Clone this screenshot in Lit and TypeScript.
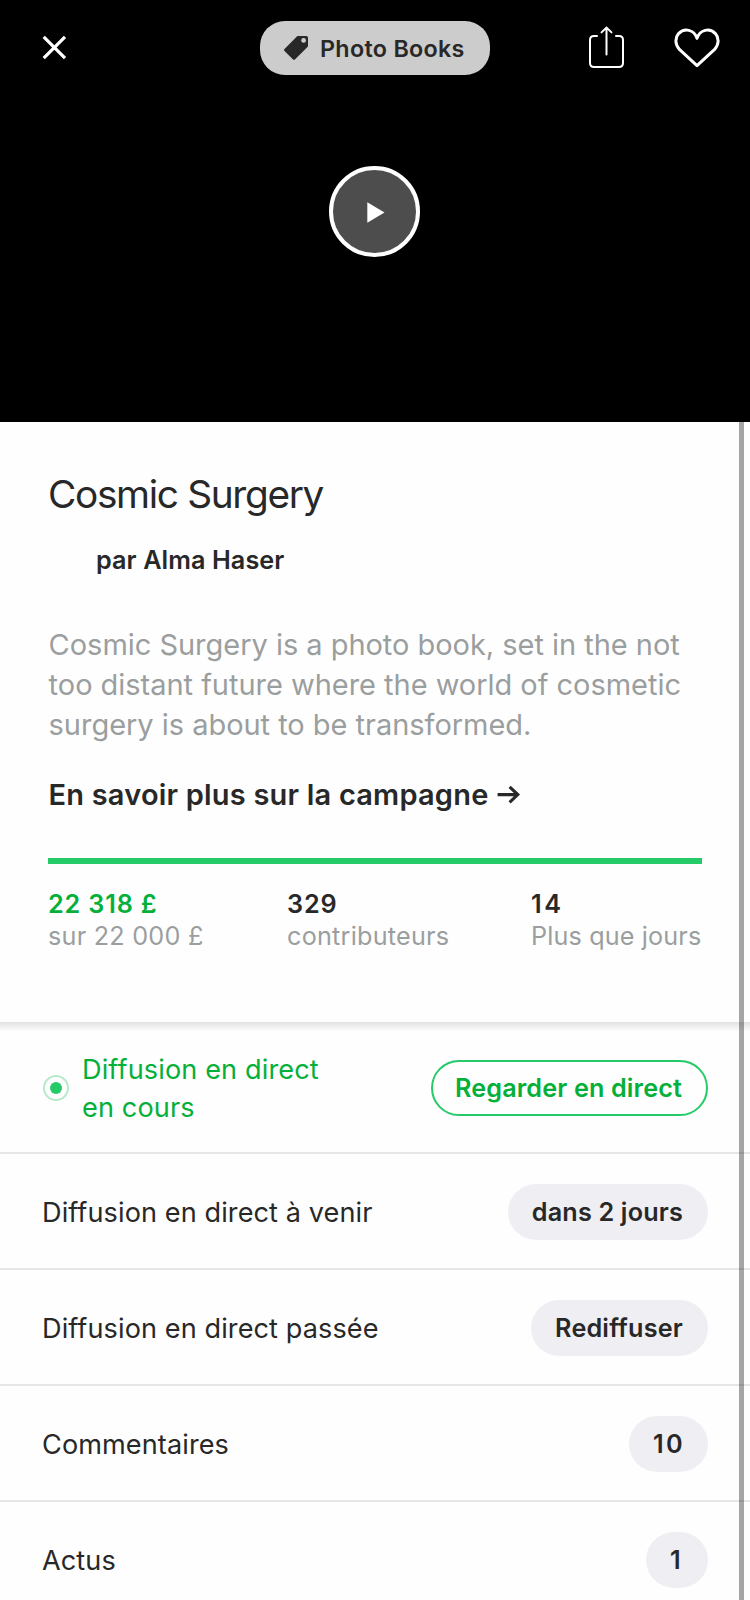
import { LitElement, html, css } from "lit";
import { customElement, state } from "lit/decorators.js";
import { classMap } from "lit/directives/class-map.js";

interface Stat {
  value: string;
  label: string;
  kind: "pledged" | "backers" | "days";
}

interface Row {
  label: string;
  badge: string;
  numeric?: boolean;
}

@customElement("project-hero")
export class ProjectHero extends LitElement {
  static styles = css`
    :host {
      display: flex;
      flex-direction: column;
      align-items: center;
      height: 422px;
      background: #000;
    }
    .nav {
      box-sizing: border-box;
      width: 100%;
      display: grid;
      grid-template-columns: 1fr auto 1fr;
      align-items: center;
      padding: 21px 30px 0 42px;
      height: 75px;
    }
    .close {
      display: block;
      justify-self: start;
    }
    .category {
      box-sizing: border-box;
      display: flex;
      align-items: center;
      width: 230px;
      height: 54px;
      padding: 0 24px;
      gap: 12px;
      margin-left: -12px;
      border-radius: 25px;
      background: #ccc;
      color: #282828;
      font-size: 23.3px;
      font-weight: 600;
      letter-spacing: 0.31px;
      line-height: 54px;
      white-space: nowrap;
    }
    .category span {
      padding-top: 2px;
      line-height: 52px;
    }
    .tag {
      flex: none;
      display: block;
    }
    .actions {
      justify-self: end;
      display: flex;
      align-items: center;
      gap: 50px;
    }
    .actions svg {
      display: block;
    }
    .share {
      margin-bottom: 1px;
    }
    .play {
      box-sizing: border-box;
      display: flex;
      align-items: center;
      justify-content: center;
      width: 91px;
      height: 91px;
      margin: 91px 1px 0 0;
      padding: 0;
      border: 4px solid #fff;
      border-radius: 50%;
      background: #4d4d4d;
    }
    .play svg {
      display: block;
      margin: 2px 0 0 2px;
    }
  `;

  render() {
    return html`
      <nav class="nav">
        <svg class="close" width="25" height="26" viewBox="0 0 25 26" fill="none" stroke="#fff" stroke-width="3.2">
          <path d="M1.7 1.9 23 23.2M23 1.9 1.7 23.2" />
        </svg>
        <div class="category">
          <svg class="tag" width="24" height="24" viewBox="0 0 24 24" fill="#282828">
            <path fill-rule="evenodd" d="M13.4 0H22.4Q24 0 24 1.6V10.4L10.9 23.5Q10 24.4 9.1 23.5L0.5 14.9Q-0.4 14 0.5 13.1ZM19.6 2A2.4 2.4 0 1 0 19.6 6.8A2.4 2.4 0 1 0 19.6 2Z" />
          </svg>
          <span>Photo Books</span>
        </div>
        <div class="actions">
          <svg class="share" width="36" height="43" viewBox="0 0 36 43" fill="none" stroke="#fff" stroke-width="2" stroke-linecap="round">
            <path d="M9 10H6Q2 10 2 14V37Q2 41 6 41H31Q35 41 35 37V14Q35 10 31 10H28" />
            <path d="M18.5 28.5V2M13.5 6.4 18.5 1.6 23.5 6.4" />
          </svg>
          <svg width="46" height="40" viewBox="0 0 46 40" fill="none" stroke="#fff" stroke-width="3" stroke-linejoin="round">
            <path d="M23 37.6 5.4 21.4C1.2 16.8 0.6 10.2 4.6 5.6C10.2 -0.2 20 1.2 23 10.4C26 1.2 35.8 -0.2 41.4 5.6C45.4 10.2 44.8 16.8 40.6 21.4Z" />
          </svg>
        </div>
      </nav>
      <button class="play" aria-label="Lire">
        <svg width="18" height="21" viewBox="0 0 18 21" fill="#fff"><path d="M0.3 0.3 17.5 10.5 0.3 20.7Z" /></svg>
      </button>
    `;
  }
}

@customElement("project-summary")
export class ProjectSummary extends LitElement {
  static styles = css`
    :host {
      display: block;
      box-sizing: border-box;
      height: 600px;
      padding: 48px 48px 0;
      color: #282828;
      background: #fefefe;
    }
    h1,
    p {
      margin: 0;
      white-space: nowrap;
    }
    .title {
      font-size: 38.8px;
      line-height: 48px;
      font-weight: 400;
      letter-spacing: -1.34px;
    }
    .author {
      margin-top: 26px;
      padding-left: 48px;
      font-size: 25.2px;
      line-height: 32px;
      font-weight: 600;
      letter-spacing: 0.09px;
    }
    .blurb {
      margin-top: 49px;
      padding-left: 0.6px;
      font-size: 29px;
      line-height: 40px;
      letter-spacing: -0.03px;
      color: #9b9e9e;
    }
    .more {
      display: flex;
      align-items: center;
      gap: 8px;
      margin-top: 32px;
      padding-left: 0.5px;
      font-size: 29px;
      line-height: 36px;
      font-weight: 600;
      letter-spacing: 0.2px;
    }
    .more svg {
      display: block;
    }
    .progress {
      height: 6px;
      margin-top: 45px;
      background: #25cb68;
    }
    .stats {
      display: grid;
      grid-template-columns: 239px 244px 171px;
      margin-top: 24px;
      font-size: 25.2px;
      line-height: 32px;
      white-space: nowrap;
    }
    .value {
      font-weight: 600;
      letter-spacing: 0.85px;
    }
    .label {
      color: #9b9e9e;
      letter-spacing: 0.24px;
    }
    .pledged .value {
      color: #05b03a;
    }
    .days .value {
      letter-spacing: 2.5px;
    }
    .days .label {
      letter-spacing: 0.14px;
    }
  `;

  @state() private stats: Stat[] = [
    { value: "22 318 £", label: "sur 22 000 £", kind: "pledged" },
    { value: "329", label: "contributeurs", kind: "backers" },
    { value: "14", label: "Plus que jours", kind: "days" },
  ];

  render() {
    return html`
      <h1 class="title">Cosmic Surgery</h1>
      <p class="author">par Alma Haser</p>
      <p class="blurb">
        Cosmic Surgery is a photo book, set in the not<br />too distant future where the world of cosmetic<br />surgery is about to be transformed.
      </p>
      <p class="more">
        <span>En savoir plus sur la campagne</span>
        <svg width="24" height="20" viewBox="0 0 24 20" fill="none" stroke="#282828" stroke-width="3.1">
          <path d="M0.6 9.6H20.8M12.6 1.8 20.8 9.6 12.6 17.4" />
        </svg>
      </p>
      <div class="progress"></div>
      <div class="stats">
        ${this.stats.map(
          (s) => html`
            <div class=${s.kind}>
              <div class="value">${s.value}</div>
              <div class="label">${s.label}</div>
            </div>
          `,
        )}
      </div>
    `;
  }
}

@customElement("project-menu")
export class ProjectMenu extends LitElement {
  static styles = css`
    :host {
      display: block;
      color: #282828;
      background: #fefefe;
    }
    .shadow {
      height: 10px;
      margin-bottom: -10px;
      background: linear-gradient(#e1e1e1, #ececec 35%, #f8f8f8 75%, #fefefe);
    }
    .row {
      box-sizing: border-box;
      display: flex;
      align-items: center;
      justify-content: space-between;
      height: 116px;
      padding: 2px 42px 0;
      border-bottom: 2px solid #e6e6e6;
      font-size: 27.1px;
      line-height: 38px;
      letter-spacing: 0.09px;
      white-space: nowrap;
    }
    .text {
      padding-top: 2px;
    }
    .live {
      height: 132px;
      padding-top: 2px;
      color: #05b03a;
      letter-spacing: 0.13px;
    }
    .status {
      display: flex;
      align-items: center;
      gap: 13px;
      padding-left: 1px;
    }
    .beacon {
      box-sizing: border-box;
      display: flex;
      align-items: center;
      justify-content: center;
      width: 26px;
      height: 26px;
      border: 2px solid #b6eaca;
      border-radius: 50%;
    }
    .dot {
      width: 12px;
      height: 12px;
      border-radius: 50%;
      background: #25cb68;
    }
    .pill {
      box-sizing: border-box;
      height: 56px;
      padding: 0 25px 0 24px;
      border-radius: 28px;
      background: #efeef3;
      font-size: 25.2px;
      line-height: 56px;
      font-weight: 600;
      letter-spacing: 0.19px;
    }
    .numeric {
      min-width: 62px;
      padding-right: 23px;
      letter-spacing: 2.4px;
    }
    .watch {
      width: 277px;
      padding: 0 22px;
      border: 2px solid #25cb68;
      background: none;
      line-height: 52px;
      letter-spacing: 0.14px;
    }
  `;

  @state() private rows: Row[] = [
    { label: "Diffusion en direct à venir", badge: "dans 2 jours" },
    { label: "Diffusion en direct passée", badge: "Rediffuser" },
    { label: "Commentaires", badge: "10", numeric: true },
    { label: "Actus", badge: "1", numeric: true },
  ];

  render() {
    return html`
      <div class="shadow"></div>
      <div class="row live">
        <div class="status">
          <div class="beacon"><div class="dot"></div></div>
          <div class="text">Diffusion en direct<br />en cours</div>
        </div>
        <div class="pill watch">Regarder en direct</div>
      </div>
      ${this.rows.map(
        (r) => html`
          <div class="row">
            <div class="text">${r.label}</div>
            <div class=${classMap({ pill: true, numeric: !!r.numeric })}>${r.badge}</div>
          </div>
        `,
      )}
    `;
  }
}

@customElement("app-root")
export class AppRoot extends LitElement {
  static styles = css`
    :host {
      display: block;
      position: relative;
      width: 750px;
      height: 1600px;
      overflow: hidden;
      background: #fefefe;
      font-family: Inter, "Liberation Sans", sans-serif;
    }
    .scrollbar {
      position: absolute;
      top: 422px;
      right: 6px;
      bottom: 0;
      width: 5px;
      background: rgba(0, 0, 0, 0.35);
    }
  `;

  render() {
    return html`
      <project-hero></project-hero>
      <project-summary></project-summary>
      <project-menu></project-menu>
      <div class="scrollbar"></div>
    `;
  }
}
